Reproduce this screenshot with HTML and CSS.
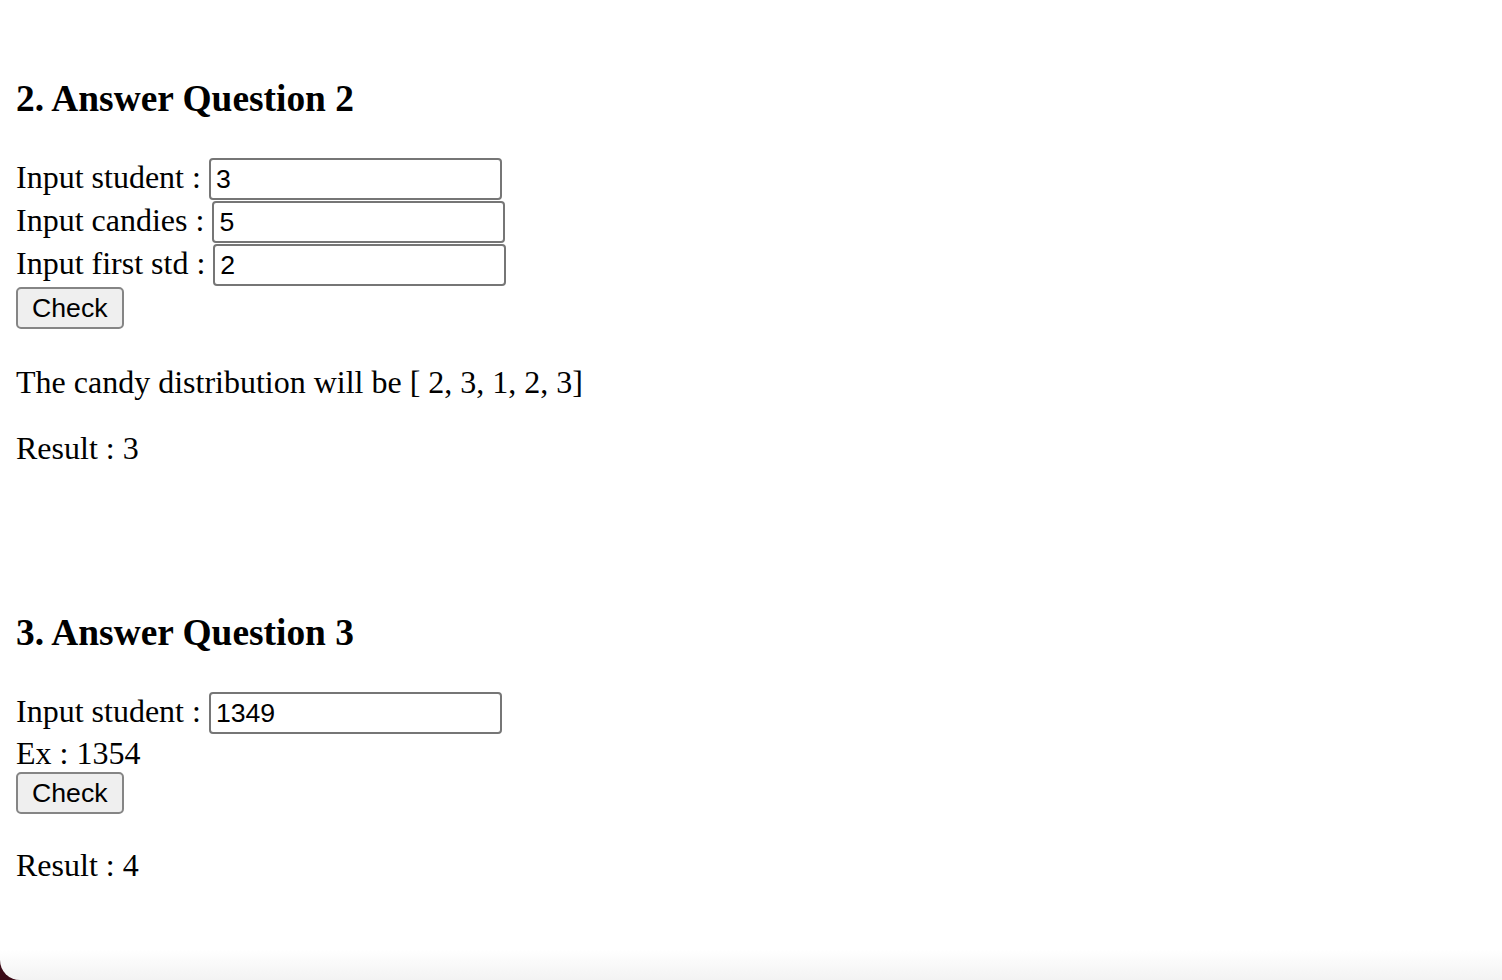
FILE: index.html
```html
<!DOCTYPE html>
<html lang="en">
<head>
<meta charset="utf-8">
<title>Answers</title>
<link rel="stylesheet" href="styles.css">
</head>
<body>
  <section class="question">
    <h3 class="q-title">2. Answer Question 2</h3>
    <div class="row">Input student : <input class="field" type="text" value="3"></div>
    <div class="row">Input candies : <input class="field" type="text" value="5"></div>
    <div class="row">Input first std : <input class="field" type="text" value="2"></div>
    <button class="check" type="button">Check</button>
    <p class="output output-first">The candy distribution will be [ 2, 3, 1, 2, 3]</p>
    <p class="output">Result : 3</p>
  </section>
  <section class="question question-next">
    <h3 class="q-title">3. Answer Question 3</h3>
    <div class="row">Input student : <input class="field" type="text" value="1349"></div>
    <div class="hint">Ex : 1354</div>
    <button class="check" type="button">Check</button>
    <p class="output output-last">Result : 4</p>
  </section>
</body>
</html>
```

FILE: styles.css
```css
html {
  background: #3b0b17;
}

body {
  margin: 0;
  min-height: 980px;
  box-sizing: border-box;
  padding: 40px 16px 0;
  background: linear-gradient(to bottom, #ffffff 0, #ffffff 950px, #f3f3f3 980px);
  border-bottom-left-radius: 20px;
  font-family: "Liberation Serif", "Times New Roman", serif;
  font-size: 32px;
  line-height: 36px;
  color: #000;
}

.question {
  margin: 0;
}

.question-next {
  margin-top: 146px;
}

.q-title {
  font-size: 37.4px;
  line-height: 44px;
  font-weight: bold;
  margin: 37px 0;
}

.row {
  height: 43px;
  line-height: 36px;
  white-space: nowrap;
}

.field {
  box-sizing: border-box;
  width: 293px;
  height: 42px;
  margin: 0;
  padding: 0 5px;
  border: 2px solid #767676;
  border-radius: 4px;
  background: #fff;
  font-family: "Liberation Sans", Arial, sans-serif;
  font-size: 26.67px;
  color: #000;
  vertical-align: baseline;
}

.hint {
  line-height: 37px;
}

.check {
  display: block;
  box-sizing: border-box;
  height: 42px;
  margin: 0;
  padding: 0 14px;
  border: 2px solid #858585;
  border-radius: 5px;
  background: #efefef;
  font-family: "Liberation Sans", Arial, sans-serif;
  font-size: 26.67px;
  color: #000;
}

.output {
  margin: 32px 0;
  line-height: 34px;
}

.output-first {
  margin-top: 36px;
}

.output-last {
  margin-top: 34px;
}
```
